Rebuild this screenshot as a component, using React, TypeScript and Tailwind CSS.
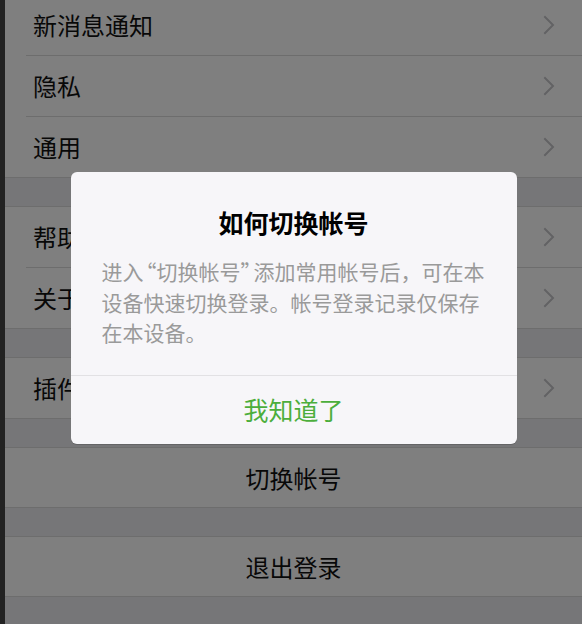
import React from 'react'

const font = { fontFamily: '"Noto Sans CJK SC", "Noto Sans", sans-serif' }

function Chevron() {
  return (
    <svg width="12" height="20" viewBox="0 0 12 20" fill="none" className="shrink-0">
      <path d="M2 2 L10 10 L2 18" stroke="#c4c4c8" strokeWidth="2" strokeLinecap="square" />
    </svg>
  )
}

function Row({ label, last }: { label: string; last?: boolean }) {
  return (
    <div>
      <div className="h-[60px] flex items-center justify-between pl-[28px] pr-[27px]">
        <span className="text-[24px] text-[#111]">{label}</span>
        <Chevron />
      </div>
      {!last && <div className="ml-[21px] h-px bg-[#dadada]" />}
    </div>
  )
}

function Section({ items }: { items: string[] }) {
  return (
    <div className="bg-white border-y border-[#dadada]">
      {items.map((item, i) => (
        <Row key={item} label={item} last={i === items.length - 1} />
      ))}
    </div>
  )
}

function ActionRow({ label }: { label: string }) {
  return (
    <div className="bg-white border-y border-[#dadada] h-[61px] flex items-center justify-center">
      <span className="text-[24px] text-[#111]">{label}</span>
    </div>
  )
}

export default function App() {
  return (
    <div className="relative h-[624px] overflow-hidden flex bg-[#444]" style={font}>
      {/* 左侧窄条 */}
      <div className="w-[5px] shrink-0 bg-[#444]" />

      {/* 设置页面 */}
      <div className="flex-1 bg-[#ececf1] -mt-[6px] flex flex-col gap-[28px]">
        <Section items={['新消息通知', '隐私', '通用']} />
        <Section items={['帮助与反馈', '关于微信']} />
        <Section items={['插件']} />
        <ActionRow label="切换帐号" />
        <ActionRow label="退出登录" />
      </div>

      {/* 遮罩 */}
      <div className="absolute inset-0 bg-black/50" />

      {/* 弹窗 */}
      <div className="absolute inset-0 flex justify-center items-start pt-[172px] pl-[5px]">
        <div className="w-[446px] bg-[#f7f6f9] rounded-[6px] overflow-hidden shadow-[0_1px_0_rgba(0,0,0,0.15)]">
          <div className="pt-[33px] pb-[27px] px-[31px]">
            <div className="text-center text-[25px] leading-[34px] font-semibold text-black">
              如何切换帐号
            </div>
            <div className="mt-[17px] text-[21px] text-[#9a9a9a] whitespace-nowrap">
              <div className="h-[30.5px] leading-[30.5px] flex items-center">
                进入
                <span className="w-[13px] text-right [font-feature-settings:'halt'] leading-none">“</span>
                切换帐号
                <span className="w-[13px] text-left [font-feature-settings:'halt'] leading-none">”</span>
                添加常用帐号后，可在本
              </div>
              <div className="h-[30.5px] leading-[30.5px]">设备快速切换登录。帐号登录记录仅保存</div>
              <div className="h-[30.5px] leading-[30.5px]">在本设备。</div>
            </div>
          </div>
          <div className="h-px bg-[#e2e1e4]" />
          <button className="w-full h-[68px] flex items-center justify-center text-[25px] text-[#4cae3c]">
            我知道了
          </button>
        </div>
      </div>
    </div>
  )
}
